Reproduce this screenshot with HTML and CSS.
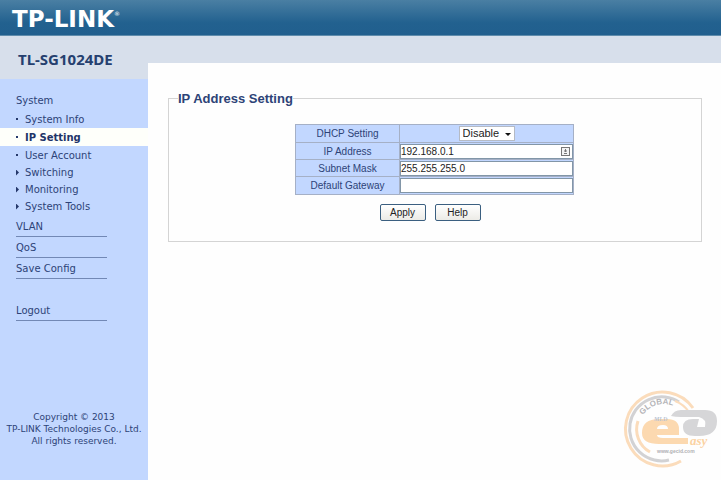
FILE: index.html
```
<!DOCTYPE html>
<html lang="en">
<head>
    <meta charset="UTF-8">
    <meta name="viewport" content="width=device-width, initial-scale=1.0">
    <title>TL-SG1024DE</title>
    <link rel="stylesheet" href="styles.css">
</head>
<body>
    <header class="topbar">
        <span class="brand">TP-LINK<sup class="reg">®</sup></span>
    </header>

    <div class="page">
        <aside class="sidebar">
            <h1 class="model">TL-SG1024DE</h1>
            <nav class="menu">
                <a class="menu-title" href="#">System</a>
                <ul class="submenu">
                    <li><a class="dot" href="#">System Info</a></li>
                    <li class="active"><a class="dot" href="#">IP Setting</a></li>
                    <li><a class="dot" href="#">User Account</a></li>
                    <li><a class="arrow" href="#">Switching</a></li>
                    <li><a class="arrow" href="#">Monitoring</a></li>
                    <li><a class="arrow" href="#">System Tools</a></li>
                </ul>
                <a class="menu-item" href="#">VLAN</a>
                <a class="menu-item" href="#">QoS</a>
                <a class="menu-item" href="#">Save Config</a>
                <a class="menu-item logout" href="#">Logout</a>
            </nav>
            <p class="copyright">Copyright © 2013<br>TP-LINK Technologies Co., Ltd.<br>All rights reserved.</p>
        </aside>

        <main class="content">
            <div class="strip"></div>
            <form class="panel-form">
                <fieldset class="panel">
                    <legend>IP Address Setting</legend>
                    <table class="settings">
                        <tr class="tall">
                            <th><label for="dhcp">DHCP Setting</label></th>
                            <td>
                                <span class="select-wrap">
                                    <select id="dhcp">
                                        <option>Disable</option>
                                        <option>Enable</option>
                                    </select>
                                </span>
                            </td>
                        </tr>
                        <tr>
                            <th><label for="ip">IP Address</label></th>
                            <td>
                                <div class="field">
                                    <input type="text" id="ip" value="192.168.0.1">
                                    <svg class="field-icon" viewBox="0 0 9 9" aria-hidden="true">
                                        <rect x="0.5" y="0.5" width="8" height="8" fill="#f4f4f4" stroke="#777"/>
                                        <path d="M4.5 2v3M3 4h3M3 6.5h3" fill="none" stroke="#777"/>
                                    </svg>
                                </div>
                            </td>
                        </tr>
                        <tr>
                            <th><label for="mask">Subnet Mask</label></th>
                            <td><div class="field"><input type="text" id="mask" value="255.255.255.0"></div></td>
                        </tr>
                        <tr class="tall">
                            <th><label for="gateway">Default Gateway</label></th>
                            <td><div class="field"><input type="text" id="gateway" value=""></div></td>
                        </tr>
                    </table>
                    <div class="buttons">
                        <button type="button">Apply</button>
                        <button type="button">Help</button>
                    </div>
                </fieldset>
            </form>
        </main>
    </div>

    <svg class="watermark" viewBox="0 0 100 84" aria-hidden="true">
        <defs>
            <path id="ring-text" d="M22 28A25 25 0 0 1 60 24"/>
        </defs>
        <g fill="none" stroke="#fbdcbb" stroke-width="3">
            <path d="M72 21A37 37 0 1 0 60 74"/>
            <path stroke="#d2d2d4" d="M58 15A32 32 0 1 0 48 73"/>
            <path d="M17 34A26 26 0 0 0 29 65"/>
            <path stroke-width="2" d="M54 14A30 30 0 0 1 68 25"/>
        </g>
        <text class="wm-global"><textPath href="#ring-text">GLOBAL</textPath></text>
        <path fill="#d6d6d8" fill-rule="evenodd" d="M50 29Q53 23 60 23H84Q96 23 96 34Q96 49 78 49H74Q62 49 62 40Q62 32 72 32H78L76 40H84Q86 32 78 30H60Q54 30 50 29Z"/>
        <path fill="#fcd9b0" fill-rule="evenodd" d="M38 32H46Q58 32 58 42V48H36Q36 51 42 51H67V57H38Q21 57 21 46Q21 32 38 32ZM36 42H47Q47 38 42 38Q36 38 36 42Z"/>
        <text class="wm-small" x="33" y="34">MLD</text>
        <text class="wm-easy" x="69" y="58">asy</text>
        <text class="wm-url" x="36" y="66">www.gecid.com</text>
    </svg>
</body>
</html>
```
FILE: styles.css
```
* {
    box-sizing: border-box;
}
body {
    margin: 0;
    min-height: 100vh;
    display: flex;
    flex-direction: column;
    font-family: Verdana, "DejaVu Sans", sans-serif;
    font-size: 10px;
    color: #2d4377;
    background-color: #fefefe;
}
a {
    color: inherit;
    text-decoration: none;
}
.topbar {
    height: 36px;
    padding: 6px 12px;
    background: linear-gradient(#4a7fa3, #22618f 65%, #215f8e);
    border-bottom: 1px solid #5f8cac;
}
.brand {
    display: flex;
    color: #fff;
    font-size: 23px;
    font-weight: bold;
    line-height: 26px;
}
.reg {
    font-size: 6px;
    font-weight: normal;
    line-height: 16px;
}
.page {
    flex: 1;
    display: flex;
}
.sidebar {
    width: 148px;
    flex-shrink: 0;
    display: flex;
    flex-direction: column;
    background-color: #c2d7ff;
}
.model {
    margin: 0;
    padding: 14px 18px 11px;
    font-family: "Noto Sans", sans-serif;
    font-size: 15px;
    line-height: 18px;
    color: #25406f;
    background-color: #d7dfeb;
}
.menu {
    padding-top: 13px;
}
.menu-title {
    display: block;
    padding-left: 16px;
    line-height: 18px;
}
.submenu {
    margin: 0 0 3px;
    padding: 0;
    list-style: none;
}
.submenu a {
    display: flex;
    align-items: center;
    height: 18px;
    padding-left: 16px;
}
.submenu .active {
    font-weight: bold;
    color: #1f3468;
    background-color: #fefffa;
}
.submenu a::before {
    content: "";
    margin-right: 7px;
    width: 2px;
    height: 2px;
    background-color: #25386b;
}
.submenu .arrow {
    height: 17px;
}
.submenu .arrow::before {
    width: 3px;
    height: 6px;
    margin-right: 6px;
    clip-path: polygon(0 0, 100% 50%, 0 100%);
}
.menu-item {
    display: block;
    width: 91px;
    height: 19px;
    margin: 0 0 2px 16px;
    line-height: 18px;
    border-bottom: 1px solid #7288b5;
}
.logout {
    margin-top: 23px;
}
.copyright {
    margin: auto 0 33px;
    font-size: 9px;
    line-height: 12px;
    text-align: center;
    white-space: nowrap;
}
.content {
    flex: 1;
}
.strip {
    height: 27px;
    background-color: #d7dfeb;
}
.panel-form {
    padding: 28px 19px 0 20px;
    font-family: "Liberation Sans", Arial, sans-serif;
}
.panel {
    margin: 0;
    padding: 18px 10px 20px 9px;
    border: 1px solid #d4d4d4;
}
legend {
    padding: 0;
    font-size: 13px;
    font-weight: bold;
    line-height: 15px;
}
.settings {
    width: 279px;
    margin: 0 auto;
    border-collapse: collapse;
    table-layout: fixed;
    background-color: #c2d7ff;
}
.settings th,
.settings td {
    height: 17px;
    padding: 0;
    border: 1px solid #a5b0c6;
    font-weight: normal;
    text-align: center;
}
.settings .tall th,
.settings .tall td {
    height: 18px;
}
.settings th {
    width: 104px;
}
.select-wrap {
    position: relative;
    display: block;
    width: 56px;
    margin: 0 auto;
}
.select-wrap::after {
    content: "";
    position: absolute;
    top: 7px;
    right: 4px;
    border: 3px solid transparent;
    border-top-color: #111;
    pointer-events: none;
}
select {
    display: block;
    appearance: none;
    width: 56px;
    height: 15px;
    padding: 0 3px;
    border: 1px solid #b5bac4;
    border-radius: 0;
    font: 11px/13px "Liberation Sans", Arial, sans-serif;
    color: #222;
    background-color: #fff;
}
.field {
    position: relative;
}
input {
    display: block;
    width: 100%;
    height: 15px;
    padding: 0;
    border: 1px solid #8296a8;
    font: 10px "Liberation Sans", Arial, sans-serif;
    color: #222;
    background-color: #fff;
}
.field-icon {
    position: absolute;
    top: 3px;
    right: 3px;
    width: 9px;
    height: 9px;
}
.buttons {
    display: flex;
    justify-content: center;
    gap: 9px;
    margin-top: 9px;
    padding-right: 9px;
}
button {
    width: 46px;
    height: 17px;
    padding: 0;
    border: 1px solid #3b5f80;
    border-radius: 2px;
    font: 10px "Liberation Sans", Arial, sans-serif;
    color: #222;
    background: linear-gradient(#fff, #ecebe6);
}
.watermark {
    position: absolute;
    right: 0;
    bottom: 9px;
    width: 100px;
    height: 84px;
}
.wm-global {
    font: bold 8px "Liberation Sans", Arial, sans-serif;
    fill: #b5b5b8;
}
.wm-small {
    font: italic bold 6px "Liberation Serif", serif;
    fill: #b9c3d3;
}
.wm-easy {
    font: italic bold 13px "Liberation Serif", serif;
    fill: #fbd2a2;
}
.wm-url {
    font: bold 5px "Liberation Sans", Arial, sans-serif;
    fill: #b0b0b3;
}
```
